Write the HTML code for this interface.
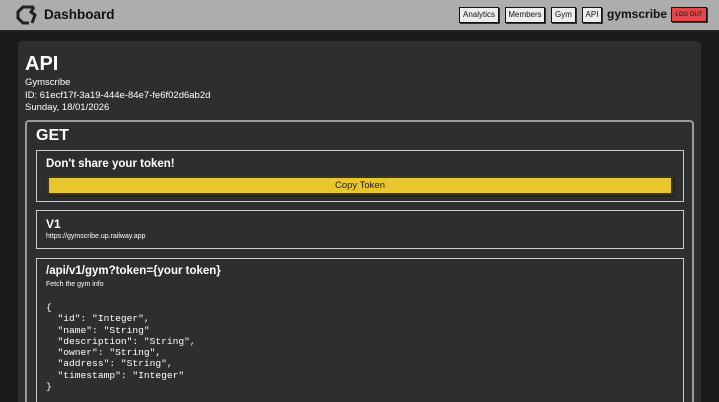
<!DOCTYPE html>
<html style="width:719px;height:402px;overflow:hidden"><head><style>
*{box-sizing:border-box;margin:0;padding:0}
body{width:719px;height:402px;overflow:hidden;background:#1b1b1b;font-family:"Liberation Sans",sans-serif;color:#fff;position:relative}
.hdr{position:absolute;left:0;top:0;width:719px;height:32px;background:#adadad;border-bottom:2px solid #222}
.logo{position:absolute;left:15px;top:4px}
.dash{position:absolute;left:44px;top:7px;font-size:13.5px;font-weight:bold;color:#111}
.btn{position:absolute;top:7px;height:16px;background:#eee;border:1px solid #111;box-shadow:1px 1px 0 #333;font-size:8px;color:#111;line-height:14px;text-align:center}
.user{position:absolute;left:607px;top:7px;font-size:12px;font-weight:bold;color:#111}
.out{position:absolute;left:671px;top:7px;width:36px;height:15px;background:#e2474a;border:1px solid #111;box-shadow:1px 1px 0 #333;font-size:6px;color:#111;line-height:13px;text-align:center}
.panel{position:absolute;left:18px;top:41px;width:683px;height:361px;background:#2e2e2e;border-radius:4px 4px 0 0}
.get{position:absolute;left:25px;top:120px;width:669px;height:290px;border:2px solid #9a9a9a;border-radius:4px}
.box{position:absolute;left:36px;width:648px;border:1.5px solid #ccc}
.t{font-weight:bold}
</style></head><body>
<div class="hdr">
<svg class="logo" width="24" height="22" viewBox="0 0 24 22"><path d="M19 3 L8 3 L3 8 L3 14 L8 19 L14 19 M19 3 L16 8 L20 11 L17 19" fill="none" stroke="#222" stroke-width="3"/></svg>
<div class="dash">Dashboard</div>
<div class="btn" style="left:459px;width:40px">Analytics</div>
<div class="btn" style="left:505px;width:40px">Members</div>
<div class="btn" style="left:551px;width:25px">Gym</div>
<div class="btn" style="left:582px;width:20px">API</div>
<div class="user">gymscribe</div>
<div class="out"><span style="position:relative;top:1px">LOG OUT</span></div>
</div>
<div class="panel"></div>
<div style="position:absolute;left:25px;top:53px;font-size:20px;font-weight:bold">API</div>
<div style="position:absolute;left:25px;top:77px;font-size:9.5px;line-height:12.5px">Gymscribe<br>ID: 61ecf17f-3a19-444e-84e7-fe6f02d6ab2d<br>Sunday, 18/01/2026</div>
<div class="get"></div>
<div style="position:absolute;left:36px;top:127px;font-size:16px;font-weight:bold">GET</div>
<div class="box" style="top:150px;height:52px">
<div class="t" style="position:absolute;left:9px;top:7px;font-size:11.5px">Don't share your token!</div>
<div style="position:absolute;left:10px;top:25px;width:626px;height:19px;background:#e8c62e;border:2px solid #3a3520;box-shadow:2px 2px 0 #222;color:#222;font-size:9.5px;text-align:center;line-height:15px">Copy Token</div>
</div>
<div class="box" style="top:210px;height:39px">
<div class="t" style="position:absolute;left:9px;top:6px;font-size:12px">V1</div>
<div style="position:absolute;left:9px;top:22px;font-size:7px">https://gymscribe.up.railway.app</div>
</div>
<div class="box" style="top:258px;height:160px">
<div class="t" style="position:absolute;left:9px;top:6px;font-size:11.5px">/api/v1/gym?token={your token}</div>
<div style="position:absolute;left:9px;top:22px;font-size:7px">Fetch the gym info</div>
<pre style="position:absolute;left:9px;top:43px;font-family:'Liberation Mono',monospace;font-size:9.6px;line-height:11.3px;color:#fff">{
  "id": "Integer",
  "name": "String"
  "description": "String",
  "owner": "String",
  "address": "String",
  "timestamp": "Integer"
}</pre>
</div>
</body></html>
